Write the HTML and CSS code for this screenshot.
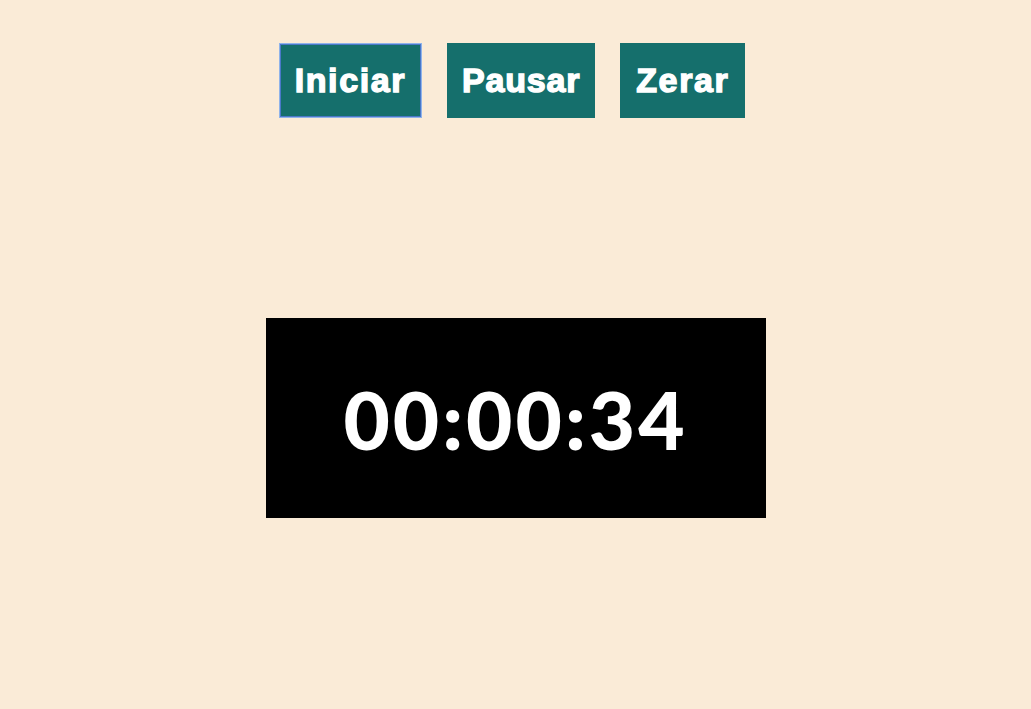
FILE: index.html
```html
<!DOCTYPE html>
<html lang="pt-BR">
<head>
<meta charset="utf-8">
<title>Cronômetro</title>
<link rel="stylesheet" href="styles.css">
</head>
<body>
<main class="app">
  <div class="controls">
    <button class="btn btn-focus">Iniciar</button>
    <button class="btn btn-tight">Pausar</button>
    <button class="btn">Zerar</button>
  </div>
  <div class="display">
    <span class="time">00:00:34</span>
  </div>
</main>
</body>
</html>
```
FILE: styles.css
```css
html, body {
  margin: 0;
  padding: 0;
  background: #faebd7;
}
.app {
  display: flex;
  flex-direction: column;
  align-items: center;
  padding-top: 43px;
  gap: 200px;
}
.controls {
  display: flex;
  gap: 25px;
  margin-right: 7px;
}
.btn {
  height: 75px;
  padding: 0 15px;
  border: 1px solid #156f6c;
  background: #156f6c;
  color: #fff;
  font-family: "Liberation Sans", Arial, sans-serif;
  font-weight: bold;
  font-size: 34px;
  letter-spacing: 1.6px;
  -webkit-text-stroke: 1.4px #fff;
  cursor: pointer;
}
.btn-tight {
  letter-spacing: 0.8px;
  padding: 0 14px;
}
.btn.btn-focus {
  border-color: #8fb3ea;
  box-shadow: inset 0 0 0 1px #4a78c8;
}
.display {
  width: 500px;
  height: 200px;
  background: #000;
  display: flex;
  align-items: center;
  justify-content: center;
}
.time {
  color: #fff;
  font-family: Lato, "DejaVu Sans", sans-serif;
  font-weight: 900;
  font-size: 80px;
  letter-spacing: 3px;
  padding-top: 2px;
}
```
